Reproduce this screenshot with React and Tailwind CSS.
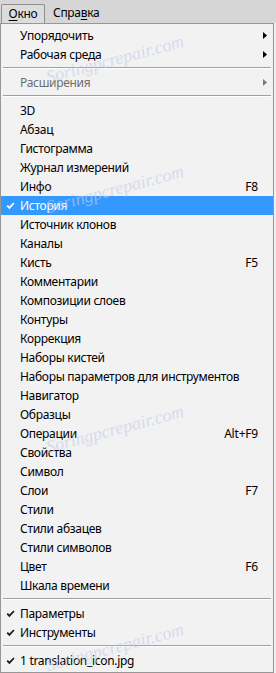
import React from "react";

const FONT = { fontFamily: '"Noto Sans", "Segoe UI", "Liberation Sans", sans-serif' };

function Check({ white }) {
  return (
    <svg width="9" height="8" viewBox="0 0 9 8" className="block">
      <path
        d="M0.6 4.2 L1.9 3 L3.4 4.6 L7.4 0.4 L8.6 1.5 L3.4 7.2 Z"
        fill={white ? "#ffffff" : "#1a1a1a"}
      />
    </svg>
  );
}

function Arrow({ gray }) {
  return (
    <svg width="4" height="7" viewBox="0 0 4 7" className="block">
      <path d="M0 0 L4 3.5 L0 7 Z" fill={gray ? "#7b7b7b" : "#000000"} />
    </svg>
  );
}

function Row({ label, shortcut, checked, active, submenu, disabled }) {
  return (
    <div
      className={
        "flex h-[19px] items-center " +
        (active ? "bg-[#3399ff] text-white" : disabled ? "text-[#6d6d6d]" : "text-black")
      }
    >
      <div className="flex w-[19px] shrink-0 items-center justify-end pr-[5px]">
        {checked ? <Check white={active} /> : null}
      </div>
      <div className="flex-1 whitespace-nowrap leading-none tracking-[-0.3px]">{label}</div>
      {shortcut ? (
        <div className="whitespace-nowrap pr-[15px] leading-none tracking-[-0.2px]">{shortcut}</div>
      ) : null}
      {submenu ? (
        <div className="pr-[6px]">
          <Arrow gray={disabled} />
        </div>
      ) : null}
    </div>
  );
}

function Sep() {
  return (
    <div className="h-[9px] px-[2px] pt-[3px]">
      <div className="h-px bg-[#a0a0a0]" />
      <div className="h-px bg-[#ffffff]" />
    </div>
  );
}

function Watermark({ top }) {
  return (
    <div
      className="pointer-events-none absolute left-[14px] w-[200px] -rotate-[15deg] whitespace-nowrap text-center text-[18px] italic text-[#c3cdea] opacity-60"
      style={{ top, fontFamily: '"Liberation Serif", serif' }}
    >
      Soringpcrepair.com
    </div>
  );
}

const items = [
  ["3D"],
  ["Абзац"],
  ["Гистограмма"],
  ["Журнал измерений"],
  ["Инфо", "F8"],
  ["История", null, true, true],
  ["Источник клонов"],
  ["Каналы"],
  ["Кисть", "F5"],
  ["Комментарии"],
  ["Композиции слоев"],
  ["Контуры"],
  ["Коррекция"],
  ["Наборы кистей"],
  ["Наборы параметров для инструментов"],
  ["Навигатор"],
  ["Образцы"],
  ["Операции", "Alt+F9"],
  ["Свойства"],
  ["Символ"],
  ["Слои", "F7"],
  ["Стили"],
  ["Стили абзацев"],
  ["Стили символов"],
  ["Цвет", "F6"],
  ["Шкала времени"],
];

export default function App() {
  return (
    <div className="h-[673px] w-[276px] overflow-hidden bg-[#f0f0f0] text-[12px]" style={FONT}>
      {/* menu bar */}
      <div className="flex h-[23px] items-end bg-[#d6d6d6] pl-[1px]">
        <div className="flex h-[19px] w-[44px] items-center justify-center rounded-t-[2px] border border-b-0 border-[#8f8f8f] bg-[#dcdcdc] pb-[1px] leading-none tracking-[-0.3px] text-black">
          <span>
            <span className="underline underline-offset-2">О</span>кно
          </span>
        </div>
        <div className="flex h-[19px] items-center pb-[1px] pl-[8px] leading-none tracking-[-0.3px] text-black">
          <span>
            Спра<span className="underline underline-offset-2">в</span>ка
          </span>
        </div>
      </div>

      {/* dropdown panel */}
      <div className="relative h-[650px] w-[274px] overflow-hidden border border-[#979797] bg-[#f2f2f2] pt-[2px]">
        <Row label="Упорядочить" submenu />
        <Row label="Рабочая среда" submenu />
        <Sep />
        <Row label="Расширения" submenu disabled />
        <Sep />
        {items.map(([label, shortcut, checked, active]) => (
          <Row key={label} label={label} shortcut={shortcut} checked={checked} active={active} />
        ))}
        <Sep />
        <Row label="Параметры" checked />
        <Row label="Инструменты" checked />
        <Sep />
        <Row label="1 translation_icon.jpg" checked />

        <Watermark top={22} />
        <Watermark top={152} />
        <Watermark top={392} />
        <Watermark top={610} />
      </div>
    </div>
  );
}
